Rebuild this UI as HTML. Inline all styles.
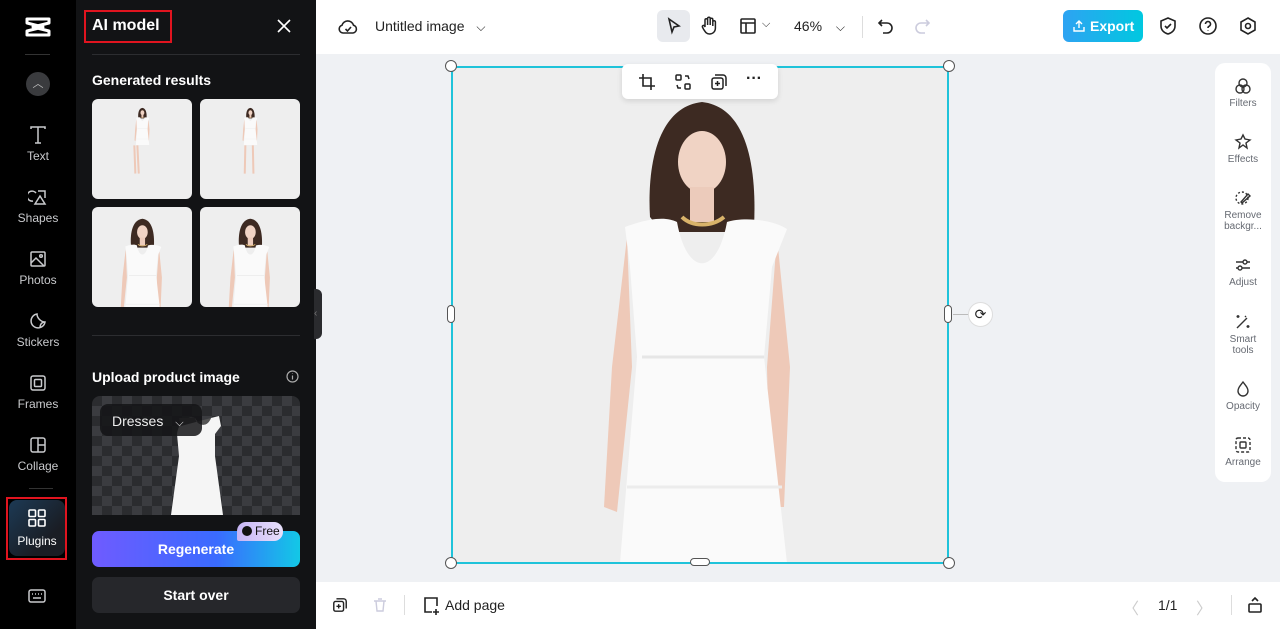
<!DOCTYPE html>
<html><head><meta charset="utf-8"><style>
*{box-sizing:border-box;margin:0;padding:0}
body{width:1280px;height:629px;overflow:hidden;font-family:"Liberation Sans",sans-serif;background:#eff1f4;position:relative}
.abs{position:absolute}
.side{left:0;top:0;width:76px;height:629px;background:#000}
.si{position:absolute;left:0;width:76px;text-align:center;color:#c9cacd;font-size:12px}
.si svg{display:block;margin:0 auto 3px}
.panel{left:76px;top:0;width:240px;height:629px;background:#121315}
.h{color:#fff;font-weight:bold;font-size:14px}
.thumb{position:absolute;width:100px;height:100px;border-radius:6px;background:#eeeeee;overflow:hidden}
.top{left:316px;top:0;width:964px;height:54px;background:#fff}
.bot{left:316px;top:582px;width:964px;height:47px;background:#fff}
.ri{position:absolute;left:0;width:56px;text-align:center;color:#666a72;font-size:10px;line-height:11px}
.ri svg{display:block;margin:0 auto 3px}
.hd{position:absolute;width:12px;height:12px;border-radius:50%;background:#fff;border:1px solid #555}
</style></head><body>
<svg width="0" height="0" style="position:absolute"><defs>
<g id="woman">
<path d="M198 150 C195 100 205 40 250 35 C295 40 305 100 302 160 L290 165 L210 165Z" fill="#3d2a22"/>
<ellipse cx="250" cy="95" rx="24" ry="31" fill="#f0d3c4"/>
<rect x="238" y="120" width="24" height="35" fill="#eccbbb"/>
<path d="M175 170 L160 300 L152 440 L165 445 L180 300Z" fill="#eec9b8"/>
<path d="M325 170 L338 300 L332 440 L318 440 L315 300Z" fill="#eec9b8"/>
<path d="M173 160 C200 150 215 150 225 155 C235 210 265 210 275 155 C290 150 320 152 335 162 L320 200 L312 290 L335 496 L168 496 L185 290 L178 200Z" fill="#fafafa"/>
<path d="M190 290 L312 290" stroke="#e6e6e6" stroke-width="3"/>
<path d="M175 420 L330 420" stroke="#ececec" stroke-width="3"/>
<path d="M230 150 C240 160 260 160 272 150" stroke="#d9b36a" stroke-width="4" fill="none"/>
</g>
</defs></svg>

<div class="abs side">
 <svg class="abs" style="left:25px;top:16px" width="26" height="22" viewBox="0 0 26 22"><path d="M2 3 L24 3 L24 7 L8 11 L24 15 L24 19 L2 19 L2 15 L18 11 L2 7Z" fill="none" stroke="#fff" stroke-width="3" stroke-linejoin="round"/></svg>
 <div class="abs" style="left:25px;top:54px;width:25px;height:1px;background:#333"></div>
 <div class="abs" style="left:26px;top:72px;width:24px;height:24px;border-radius:50%;background:#3a3b3e;color:#bbb;font-size:11px;text-align:center;line-height:24px">︿</div>
 <div class="si" style="top:124px"><svg width="20" height="22" viewBox="0 0 20 20" fill="none" stroke="#c9cacd" stroke-width="1.5"><path d="M3 4V2h14v2M10 2v16M7 18h6"/></svg>Text</div>
 <div class="si" style="top:186px"><svg width="20" height="22" viewBox="0 0 20 20" fill="none" stroke="#c9cacd" stroke-width="1.5"><path d="M8 6a5 5 0 1 0-3 8M10 4h7v7M12 9l-5 8h10z"/></svg>Shapes</div>
 <div class="si" style="top:248px"><svg width="20" height="22" viewBox="0 0 20 20" fill="none" stroke="#c9cacd" stroke-width="1.5"><rect x="3" y="3" width="14" height="14" rx="1"/><path d="M3 14l5-5 8 8"/><circle cx="13" cy="7" r="1.3"/></svg>Photos</div>
 <div class="si" style="top:310px"><svg width="20" height="22" viewBox="0 0 20 20" fill="none" stroke="#c9cacd" stroke-width="1.5"><path d="M17 11a7 7 0 1 1-8-8c0 4 4 8 8 8zM17 11c-3 0-5 2-5 6"/></svg>Stickers</div>
 <div class="si" style="top:372px"><svg width="20" height="22" viewBox="0 0 20 20" fill="none" stroke="#c9cacd" stroke-width="1.5"><rect x="3" y="3" width="14" height="14" rx="2"/><rect x="6.5" y="6.5" width="7" height="7" rx="1"/></svg>Frames</div>
 <div class="si" style="top:434px"><svg width="20" height="22" viewBox="0 0 20 20" fill="none" stroke="#c9cacd" stroke-width="1.5"><rect x="3" y="3" width="14" height="14" rx="2"/><path d="M10 3v14M10 10h7"/></svg>Collage</div>
 <div class="abs" style="left:29px;top:488px;width:24px;height:1px;background:#333"></div>
 <div class="abs" style="left:9px;top:500px;width:56px;height:56px;border-radius:8px;background:linear-gradient(135deg,#1c3a55,#1a1d24 70%);color:#fff;font-size:12px;text-align:center;padding-top:8px"><svg width="20" height="20" viewBox="0 0 20 20" fill="none" stroke="#fff" stroke-width="1.6" style="display:block;margin:0 auto 6px"><rect x="2" y="2" width="6.5" height="6.5" rx="1"/><rect x="11.5" y="2" width="6.5" height="6.5" rx="1"/><rect x="2" y="11.5" width="6.5" height="6.5" rx="1"/><rect x="11.5" y="11.5" width="6.5" height="6.5" rx="1"/></svg>Plugins</div>
 <div class="abs" style="left:6px;top:497px;width:61px;height:63px;border:2px solid #e0141f"></div>
 <svg class="abs" style="left:27px;top:587px" width="20" height="18" viewBox="0 0 20 18" fill="none" stroke="#c9cacd" stroke-width="1.5"><rect x="2" y="3" width="16" height="12" rx="2"/><path d="M5 7h1M8 7h1M11 7h1M14 7h1M6 11h8"/></svg>
</div>

<div class="abs panel">
 <div class="abs h" style="left:16px;top:17px;font-size:16px">AI model</div>
 <div class="abs" style="left:8px;top:10px;width:88px;height:33px;border:2px solid #e0141f"></div>
 <svg class="abs" style="left:201px;top:19px" width="14" height="14" viewBox="0 0 14 14" stroke="#fff" stroke-width="1.6"><path d="M1 1l12 12M13 1L1 13"/></svg>
 <div class="abs" style="left:16px;top:54px;width:208px;height:1px;background:#2c2d30"></div>
 <div class="abs h" style="left:16px;top:72px">Generated results</div>
 <div class="thumb" style="left:16px;top:99px"><svg width="100" height="100" viewBox="0 0 496 496"><g transform="translate(150 30) scale(0.4)"><use href="#woman"/></g><path d="M210 230 L215 370 M225 230 L232 370" stroke="#eec9b8" stroke-width="10"/></svg></div>
 <div class="thumb" style="left:124px;top:99px"><svg width="100" height="100" viewBox="0 0 496 496"><g transform="translate(150 30) scale(0.4)"><use href="#woman"/></g><path d="M225 230 L222 370 M262 230 L265 370" stroke="#eec9b8" stroke-width="10"/></svg></div>
 <div class="thumb" style="left:16px;top:207px"><svg width="100" height="100" viewBox="0 0 496 496"><g transform="translate(-25 20) scale(1.1)"><use href="#woman"/></g></svg></div>
 <div class="thumb" style="left:124px;top:207px"><svg width="100" height="100" viewBox="0 0 496 496"><g transform="translate(-25 20) scale(1.1)"><use href="#woman"/></g></svg></div>
 <div class="abs" style="left:16px;top:335px;width:208px;height:1px;background:#2c2d30"></div>
 <div class="abs h" style="left:16px;top:369px">Upload product image</div>
 <svg class="abs" style="left:210px;top:370px" width="13" height="13" viewBox="0 0 13 13" fill="none" stroke="#aaa" stroke-width="1.2"><circle cx="6.5" cy="6.5" r="5.5"/><path d="M6.5 5.5v4M6.5 3.5v.5"/></svg>
 <div class="abs" style="left:16px;top:396px;width:208px;height:119px;border-radius:8px 8px 0 0;background-color:#2b2c2f;background-image:linear-gradient(45deg,#3b3c40 25%,transparent 25%,transparent 75%,#3b3c40 75%),linear-gradient(45deg,#3b3c40 25%,transparent 25%,transparent 75%,#3b3c40 75%);background-size:20px 20px;background-position:0 0,10px 10px;overflow:hidden">
  <svg class="abs" style="left:75px;top:0" width="70" height="119" viewBox="0 0 70 119"><path d="M10 38 C12 25 20 20 28 22 C32 30 40 32 44 22 L52 20 L54 30 L48 38 L48 60 L56 119 L4 119 L12 60Z" fill="#f5f5f5"/><path d="M12 22 L28 22 C30 30 40 32 44 22 L14 30Z" fill="#555"/></svg>
  <div class="abs" style="left:8px;top:8px;width:102px;height:32px;border-radius:8px;background:rgba(20,20,22,.85);color:#eee;font-size:14px;padding:9px 0 0 12px">Dresses <span style="margin-left:8px;font-size:11px">⌵</span></div>
 </div>
 <div class="abs" style="left:16px;top:531px;width:208px;height:36px;border-radius:7px;background:linear-gradient(90deg,#6f5bff,#3a6bff 60%,#13c8e6);color:#fff;font-weight:bold;font-size:14px;text-align:center;line-height:36px">Regenerate</div>
 <div class="abs" style="left:161px;top:522px;width:46px;height:19px;border-radius:9px 9px 9px 2px;background:linear-gradient(90deg,#c6b5f5,#e8e0fb);color:#111;font-size:12px;line-height:19px;padding-left:5px"><span style="display:inline-block;width:10px;height:10px;border-radius:50%;background:#111;vertical-align:-1px;margin-right:3px"></span>Free</div>
 <div class="abs" style="left:16px;top:577px;width:208px;height:36px;border-radius:7px;background:#26272b;color:#fff;font-weight:bold;font-size:14px;text-align:center;line-height:36px">Start over</div>
 <div class="abs" style="left:238px;top:289px;width:8px;height:50px;border-radius:0 6px 6px 0;background:#2a2b2e;color:#777;font-size:10px;line-height:50px">‹</div>
</div>

<div class="abs top">
 <svg class="abs" style="left:22px;top:17px" width="20" height="20" viewBox="0 0 20 20" fill="none" stroke="#222" stroke-width="1.6"><path d="M5 16a4 4 0 0 1-1-7.8 6 6 0 0 1 11.5 0A4 4 0 0 1 15 16z"/><path d="M7.5 12l2 2 3.5-4"/></svg>
 <div class="abs" style="left:59px;top:18px;font-size:14px;color:#222">Untitled image <span style="margin-left:8px;font-size:12px">⌵</span></div>
 <div class="abs" style="left:341px;top:10px;width:33px;height:32px;border-radius:6px;background:#e8eaee"></div>
 <svg class="abs" style="left:349px;top:17px" width="18" height="18" viewBox="0 0 18 18" fill="none" stroke="#222" stroke-width="1.6"><path d="M4 2l10 7-5 1-2 5z"/></svg>
 <svg class="abs" style="left:384px;top:16px" width="18" height="20" viewBox="0 0 18 20" fill="none" stroke="#222" stroke-width="1.5"><path d="M5 11V4a1.3 1.3 0 0 1 2.6 0v5V2.5a1.3 1.3 0 0 1 2.6 0V9V3.5a1.3 1.3 0 0 1 2.6 0V10V6a1.3 1.3 0 0 1 2.6 0v6c0 4-3 6-6 6-3 0-4-2-6-5l-1-2a1.3 1.3 0 0 1 2.2-1.2z"/></svg>
 <svg class="abs" style="left:423px;top:17px" width="18" height="18" viewBox="0 0 18 18" fill="none" stroke="#222" stroke-width="1.6"><rect x="2" y="2" width="14" height="14" rx="1"/><path d="M2 6h14M7 6v10"/></svg>
 <div class="abs" style="left:446px;top:18px;font-size:11px;color:#222">⌵</div>
 <div class="abs" style="left:478px;top:18px;font-size:14px;color:#222">46% <span style="margin-left:10px;font-size:12px">⌵</span></div>
 <div class="abs" style="left:546px;top:16px;width:1px;height:22px;background:#ddd"></div>
 <svg class="abs" style="left:561px;top:17px" width="18" height="18" viewBox="0 0 18 18" fill="none" stroke="#222" stroke-width="1.6"><path d="M5 3L2 6l3 3M2 6h8a5 5 0 0 1 0 10H6"/></svg>
 <svg class="abs" style="left:597px;top:17px" width="18" height="18" viewBox="0 0 18 18" fill="none" stroke="#ccd" stroke-width="1.6"><path d="M13 3l3 3-3 3M16 6H8a5 5 0 0 0 0 10h4"/></svg>
 <div class="abs" style="left:747px;top:10px;width:80px;height:32px;border-radius:6px;background:linear-gradient(90deg,#2ea3f2,#00c8e0);color:#fff;font-weight:bold;font-size:14px;line-height:32px;white-space:nowrap">
  <svg class="abs" style="left:10px;top:10px" width="12" height="12" viewBox="0 0 12 12" fill="none" stroke="#fff" stroke-width="1.4"><path d="M6 8V1M3 4l3-3 3 3M1 7v4h10V7"/></svg>
  <span class="abs" style="left:27px;top:0">Export</span></div>
 <svg class="abs" style="left:842px;top:16px" width="20" height="20" viewBox="0 0 20 20" fill="none" stroke="#222" stroke-width="1.6"><path d="M10 2l7 3v5c0 4-3 7-7 8-4-1-7-4-7-8V5z"/><path d="M7 10l2 2 4-4"/></svg>
 <svg class="abs" style="left:882px;top:16px" width="20" height="20" viewBox="0 0 20 20" fill="none" stroke="#222" stroke-width="1.6"><circle cx="10" cy="10" r="8"/><path d="M7.5 8a2.5 2.5 0 1 1 3.5 2.3c-.7.3-1 1-1 1.7M10 14.5v.5"/></svg>
 <svg class="abs" style="left:922px;top:16px" width="20" height="20" viewBox="0 0 20 20" fill="none" stroke="#222" stroke-width="1.6"><path d="M10 2l7 4v8l-7 4-7-4V6z"/><circle cx="10" cy="10" r="2.5"/></svg>
</div>

<div class="abs" style="left:452px;top:67px;width:496px;height:496px;background:#eeeeee;overflow:hidden"><svg width="496" height="496" viewBox="0 0 496 496"><use href="#woman"/></svg></div>
<div class="abs" style="left:451px;top:66px;width:498px;height:498px;border:2px solid #1fc3da"></div>
<div class="hd" style="left:445px;top:60px"></div><div class="hd" style="left:943px;top:60px"></div>
<div class="hd" style="left:445px;top:557px"></div><div class="hd" style="left:943px;top:557px"></div>
<div class="abs" style="left:447px;top:305px;width:8px;height:18px;border-radius:4px;background:#fff;border:1px solid #555"></div>
<div class="abs" style="left:944px;top:305px;width:8px;height:18px;border-radius:4px;background:#fff;border:1px solid #555"></div>
<div class="abs" style="left:690px;top:558px;width:20px;height:8px;border-radius:4px;background:#fff;border:1px solid #555"></div>
<div class="abs" style="left:953px;top:314px;width:16px;height:1px;background:#bbb"></div>
<div class="abs" style="left:968px;top:302px;width:25px;height:25px;border-radius:50%;background:#fff;border:1px solid #ddd;text-align:center;line-height:23px;font-size:14px;color:#222">⟳</div>
<div class="abs" style="left:622px;top:64px;width:156px;height:35px;border-radius:6px;background:#fff;box-shadow:0 2px 6px rgba(0,0,0,.12)">
 <svg class="abs" style="left:16px;top:9px" width="18" height="18" viewBox="0 0 18 18" fill="none" stroke="#222" stroke-width="1.6"><path d="M5 1v12h12M1 5h12v12"/></svg>
 <svg class="abs" style="left:52px;top:9px" width="18" height="18" viewBox="0 0 18 18" fill="none" stroke="#222" stroke-width="1.5"><rect x="2" y="2" width="5" height="5" rx="1"/><rect x="11" y="11" width="5" height="5" rx="1"/><path d="M11 3h3l1 3M7 15H4l-1-3"/></svg>
 <svg class="abs" style="left:88px;top:9px" width="18" height="18" viewBox="0 0 18 18" fill="none" stroke="#222" stroke-width="1.5"><rect x="2" y="5" width="11" height="11" rx="2"/><path d="M5 2h8a3 3 0 0 1 3 3v8M7.5 8v5M5 10.5h5"/></svg>
 <div class="abs" style="left:124px;top:6px;font-size:16px;color:#222;font-weight:bold">···</div>
</div>

<div class="abs" style="left:1215px;top:63px;width:56px;height:419px;border-radius:10px;background:#fff">
 <div class="ri" style="top:14px"><svg width="18" height="18" viewBox="0 0 18 18" fill="none" stroke="#333" stroke-width="1.4"><circle cx="9" cy="6" r="4"/><circle cx="6" cy="12" r="4"/><circle cx="12" cy="12" r="4"/></svg>Filters</div>
 <div class="ri" style="top:70px"><svg width="18" height="18" viewBox="0 0 18 18" fill="none" stroke="#333" stroke-width="1.4"><path d="M9 2l2 4 5 1-4 3 1 5-4-3-4 3 1-5-4-3 5-1z"/></svg>Effects</div>
 <div class="ri" style="top:126px"><svg width="18" height="18" viewBox="0 0 18 18" fill="none" stroke="#333" stroke-width="1.4"><circle cx="8" cy="9" r="6" stroke-dasharray="2 2"/><path d="M7 13l7-8 2 2-8 7z"/></svg>Remove<br>backgr...</div>
 <div class="ri" style="top:193px"><svg width="18" height="18" viewBox="0 0 18 18" fill="none" stroke="#333" stroke-width="1.4"><path d="M2 6h14M2 12h14"/><circle cx="11" cy="6" r="2" fill="#fff"/><circle cx="6" cy="12" r="2" fill="#fff"/></svg>Adjust</div>
 <div class="ri" style="top:250px"><svg width="18" height="18" viewBox="0 0 18 18" fill="none" stroke="#333" stroke-width="1.4"><path d="M3 15L13 5M11 3l1 1M4 2v3M2.5 3.5h3M14 12v3M12.5 13.5h3"/></svg>Smart<br>tools</div>
 <div class="ri" style="top:317px"><svg width="18" height="18" viewBox="0 0 18 18" fill="none" stroke="#333" stroke-width="1.4"><path d="M9 2c3 4 5 6 5 9a5 5 0 0 1-10 0c0-3 2-5 5-9z"/></svg>Opacity</div>
 <div class="ri" style="top:373px"><svg width="18" height="18" viewBox="0 0 18 18" fill="none" stroke="#333" stroke-width="1.4"><rect x="2" y="2" width="14" height="14" rx="2" stroke-dasharray="3 2"/><rect x="6" y="6" width="6" height="6" rx="1"/></svg>Arrange</div>
</div>

<div class="abs bot">
 <svg class="abs" style="left:16px;top:15px" width="16" height="16" viewBox="0 0 18 18" fill="none" stroke="#222" stroke-width="1.6"><rect x="2" y="5" width="11" height="11" rx="2"/><path d="M5 2h8a3 3 0 0 1 3 3v8M7.5 8v5M5 10.5h5"/></svg>
 <svg class="abs" style="left:56px;top:15px" width="16" height="16" viewBox="0 0 16 16" fill="none" stroke="#ccd" stroke-width="1.4"><path d="M2 4h12M6 2h4M4 4l1 10h6l1-10"/></svg>
 <div class="abs" style="left:88px;top:13px;width:1px;height:20px;background:#ddd"></div>
 <svg class="abs" style="left:106px;top:14px" width="18" height="20" viewBox="0 0 18 20" fill="none" stroke="#222" stroke-width="1.6"><path d="M10 16H3V2h12v8M14 13v6M11 16h6"/></svg>
 <div class="abs" style="left:129px;top:15px;font-size:14px;color:#222">Add page</div>
 <div class="abs" style="left:807px;top:13px;font-size:16px;color:#ccc">〈</div>
 <div class="abs" style="left:842px;top:15px;font-size:14px;color:#222">1/1</div>
 <div class="abs" style="left:880px;top:13px;font-size:16px;color:#ccc">〉</div>
 <div class="abs" style="left:915px;top:13px;width:1px;height:20px;background:#ddd"></div>
 <svg class="abs" style="left:930px;top:13px" width="18" height="20" viewBox="0 0 18 20" fill="none" stroke="#222" stroke-width="1.6"><rect x="3" y="9" width="12" height="8" rx="1"/><path d="M6 6l3-3 3 3"/></svg>
</div>
</body></html>
